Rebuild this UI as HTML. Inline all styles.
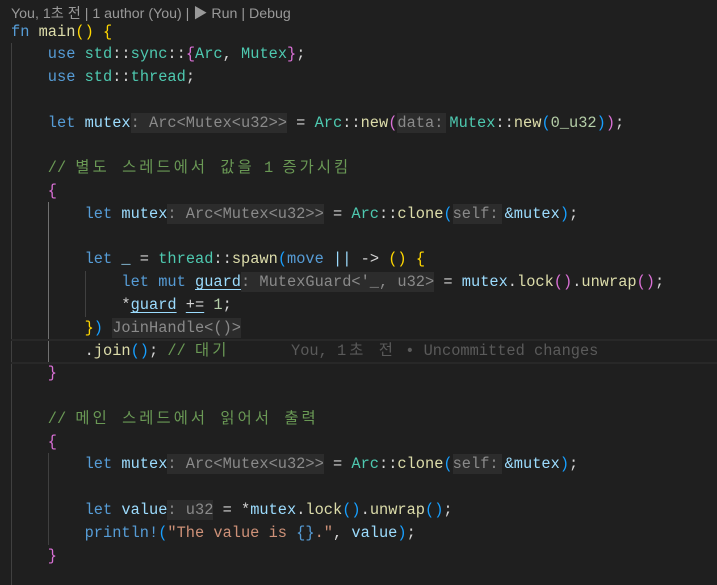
<!DOCTYPE html>
<html><head><meta charset="utf-8"><style>
html,body{margin:0;padding:0;background:#1f1f1f;width:717px;height:585px;overflow:hidden;position:relative}
.cl{position:absolute;left:11px;top:3px;font:14.2px "Liberation Sans","Noto Sans CJK KR",sans-serif;color:#999;white-space:pre}
.l{position:absolute;left:11px;height:22.78px;font:15.33px "Liberation Mono","Noto Sans CJK KR",monospace;line-height:22.78px;white-space:pre;color:#d4d4d4;margin-top:1px}
.k{color:#569cd6}.v{color:#9cdcfe}.f{color:#dcdcaa}.t{color:#4ec9b0}.c{color:#6a9955}.n{color:#b5cea8}.s{color:#ce9178}
.y{color:#ffd700}.p{color:#da70d6}.b{color:#179fff}
.h{background:#2c2c2c;color:#8a8a8a;padding:1px 0}
.kr{letter-spacing:3.1px}
.u{text-decoration:underline;text-decoration-color:#9cdcfe;text-underline-offset:3px}
.g{position:absolute;width:1px}
</style></head><body>
<div class="cl">You, 1초 전 | 1 author (You) | ▶ Run | Debug</div>
<div class="g" style="left:11px;top:43px;height:542px;background:#404040"></div>
<div class="g" style="left:48px;top:202px;height:160px;background:#707070"></div>
<div class="g" style="left:48px;top:453px;height:92px;background:#404040"></div>
<div class="g" style="left:85px;top:271px;height:46px;background:#404040"></div>
<div style="position:absolute;left:11px;right:0;top:339px;height:21px;border-top:2px solid #282828;border-bottom:2px solid #282828"></div>

<div class="l" style="top:19.6px"><span class="k">fn</span> <span class="f">main</span><span class="y">()</span> <span class="y">{</span></div>
<div class="l" style="top:42.4px">    <span class="k">use</span> <span class="t">std</span>::<span class="t">sync</span>::<span class="p">{</span><span class="t">Arc</span>, <span class="t">Mutex</span><span class="p">}</span>;</div>
<div class="l" style="top:65.2px">    <span class="k">use</span> <span class="t">std</span>::<span class="t">thread</span>;</div>
<div class="l" style="top:110.7px">    <span class="k">let</span> <span class="v">mutex</span><span class="h">: Arc&lt;Mutex&lt;u32&gt;&gt;</span> = <span class="t">Arc</span>::<span class="f">new</span><span class="p">(</span><span class="h" style="padding-right:3px">data:</span><span style="margin-left:3px"></span><span class="t">Mutex</span>::<span class="f">new</span><span class="b">(</span><span class="n">0_u32</span><span class="b">)</span><span class="p">)</span>;</div>
<div class="l" style="top:156.3px">    <span class="c">// <span class="kr">별도 스레드에서 값을</span> 1 <span class="kr">증가시킴</span></span></div>
<div class="l" style="top:179.1px">    <span class="p">{</span></div>
<div class="l" style="top:201.9px">        <span class="k">let</span> <span class="v">mutex</span><span class="h">: Arc&lt;Mutex&lt;u32&gt;&gt;</span> = <span class="t">Arc</span>::<span class="f">clone</span><span class="b">(</span><span class="h" style="padding-right:3px">self:</span><span style="margin-left:3px"></span><span class="v">&amp;mutex</span><span class="b">)</span>;</div>
<div class="l" style="top:247.4px">        <span class="k">let</span> <span class="v">_</span> = <span class="t">thread</span>::<span class="f">spawn</span><span class="b">(</span><span class="k">move</span> <span class="v">||</span> -&gt; <span class="y">()</span> <span class="y">{</span></div>
<div class="l" style="top:270.2px">            <span class="k">let</span> <span class="k">mut</span> <span class="v u">guard</span><span class="h">: MutexGuard&lt;'_, u32&gt;</span> = <span class="v">mutex</span>.<span class="f">lock</span><span class="p">()</span>.<span class="f">unwrap</span><span class="p">()</span>;</div>
<div class="l" style="top:293px">            *<span class="v u">guard</span> <span class="u">+=</span> <span class="n">1</span>;</div>
<div class="l" style="top:315.8px">        <span class="y">}</span><span class="b">)</span> <span class="h">JoinHandle&lt;()&gt;</span></div>
<div class="l" style="top:338.5px">        .<span class="f">join</span><span class="b">()</span>; <span class="c">// <span class="kr">대기</span></span></div>
<div class="l" style="top:338.5px;left:291px;color:#5a5a5a">You, <span class="kr">1초 전</span> • Uncommitted changes</div>
<div class="l" style="top:361.3px">    <span class="p">}</span></div>
<div class="l" style="top:406.9px">    <span class="c">// <span class="kr">메인 스레드에서 읽어서 출력</span></span></div>
<div class="l" style="top:429.6px">    <span class="p">{</span></div>
<div class="l" style="top:452.4px">        <span class="k">let</span> <span class="v">mutex</span><span class="h">: Arc&lt;Mutex&lt;u32&gt;&gt;</span> = <span class="t">Arc</span>::<span class="f">clone</span><span class="b">(</span><span class="h" style="padding-right:3px">self:</span><span style="margin-left:3px"></span><span class="v">&amp;mutex</span><span class="b">)</span>;</div>
<div class="l" style="top:498px">        <span class="k">let</span> <span class="v">value</span><span class="h">: u32</span> = *<span class="v">mutex</span>.<span class="f">lock</span><span class="b">()</span>.<span class="f">unwrap</span><span class="b">()</span>;</div>
<div class="l" style="top:520.8px">        <span class="k">println!</span><span class="b">(</span><span class="s">"The value is </span><span class="k">{}</span><span class="s">."</span>, <span class="v">value</span><span class="b">)</span>;</div>
<div class="l" style="top:543.5px">    <span class="p">}</span></div>
</body></html>
